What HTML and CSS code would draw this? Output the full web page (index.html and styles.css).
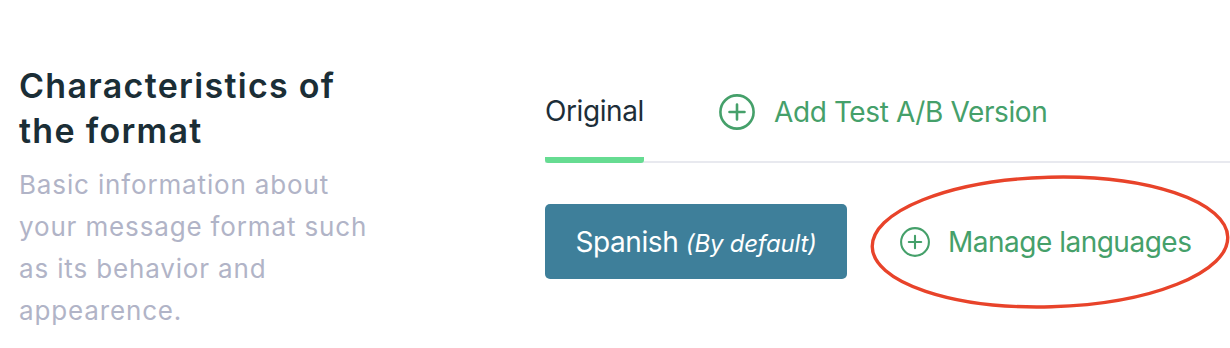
FILE: index.html
```html
<!DOCTYPE html>
<html>
<head>
<meta charset="utf-8">
<link rel="stylesheet" href="styles.css">
</head>
<body>
<div class="page">
  <section class="intro">
    <h2 class="intro-title">Characteristics of the format</h2>
    <p class="intro-text">Basic information about your message format such as its behavior and appearence.</p>
  </section>
  <section class="panel">
    <div class="tabs">
      <div class="tab tab-active">Original</div>
      <div class="tab tab-add">
        <svg class="plus-icon big" viewBox="0 0 36 36"><circle cx="18" cy="18" r="16.6" fill="none" stroke="currentColor" stroke-width="2.6"/><path d="M18 10.5v15M10.5 18h15" stroke="currentColor" stroke-width="2.6" stroke-linecap="round"/></svg>
        <span>Add Test A/B Version</span>
      </div>
    </div>
    <div class="langs">
      <button class="lang-btn">Spanish <em>(By default)</em></button>
      <div class="manage">
        <svg class="plus-icon small" viewBox="0 0 30 30"><circle cx="15" cy="15" r="13.9" fill="none" stroke="currentColor" stroke-width="2.1"/><path d="M15 8.8v12.4M8.8 15h12.4" stroke="currentColor" stroke-width="2.1" stroke-linecap="round"/></svg>
        <span>Manage languages</span>
        <svg class="ring" viewBox="0 0 360 134" preserveAspectRatio="none"><ellipse cx="180" cy="67" rx="177.8" ry="64.8" fill="none" stroke="#e8432a" stroke-width="3.4"/></svg>
      </div>
    </div>
  </section>
</div>
</body>
</html>
```
FILE: styles.css
```css
* { box-sizing: border-box; }
html, body { margin: 0; padding: 0; background: #fff; }
body { font-family: "Inter", "Noto Sans", sans-serif; }
.page {
  display: flex;
  padding: 63px 0 0 19px;
}
.intro { width: 365px; flex: none; }
.intro-title {
  margin: 0;
  max-width: 345px;
  font-size: 34px;
  line-height: 45px;
  font-weight: 600;
  color: #1b2e36;
  letter-spacing: 1.3px;
}
.intro-text {
  margin: 11px 0 0;
  font-size: 26px;
  line-height: 42px;
  color: #b1b4c7;
  letter-spacing: 0.85px;
}
.panel { margin-left: 161px; flex: 1; margin-top: -1px; }
.tabs {
  display: flex;
  align-items: flex-start;
  border-bottom: 2px solid #e8e9ef;
  height: 101px;
  padding-top: 32px;
}
.tab {
  font-size: 28px;
  line-height: 34px;
  letter-spacing: -0.4px;
}
.tab-active {
  color: #1d2e38;
  width: 99px;
  height: 69px;
  border-bottom: 6px solid #66dc92;
  border-radius: 0 0 3px 3px;
}
.tab-add {
  margin-left: 75px;
  color: #45a06a;
  display: flex;
  align-items: center;
  gap: 19px;
}
.plus-icon { display: block; flex: none; }
.plus-icon.big { width: 36px; height: 36px; }
.plus-icon.small { width: 30px; height: 30px; }
.langs {
  display: flex;
  align-items: center;
  margin-top: 41px;
}
.lang-btn {
  width: 302px;
  height: 75px;
  border: none;
  border-radius: 5px;
  background: #3e7f9a;
  color: #fff;
  font-family: inherit;
  font-size: 28px;
  letter-spacing: -0.4px;
  padding: 0;
}
.lang-btn em { font-size: 24px; letter-spacing: -0.2px; }
.manage {
  position: relative;
  margin-left: 53px;
  display: flex;
  align-items: center;
  gap: 18px;
  color: #45a06a;
  font-size: 28px;
  letter-spacing: -0.5px;
}
.ring {
  position: absolute;
  left: -30px;
  top: 50%;
  margin-top: -67px;
  width: 360px;
  height: 134px;
  transform: rotate(-1.6deg);
}
```
